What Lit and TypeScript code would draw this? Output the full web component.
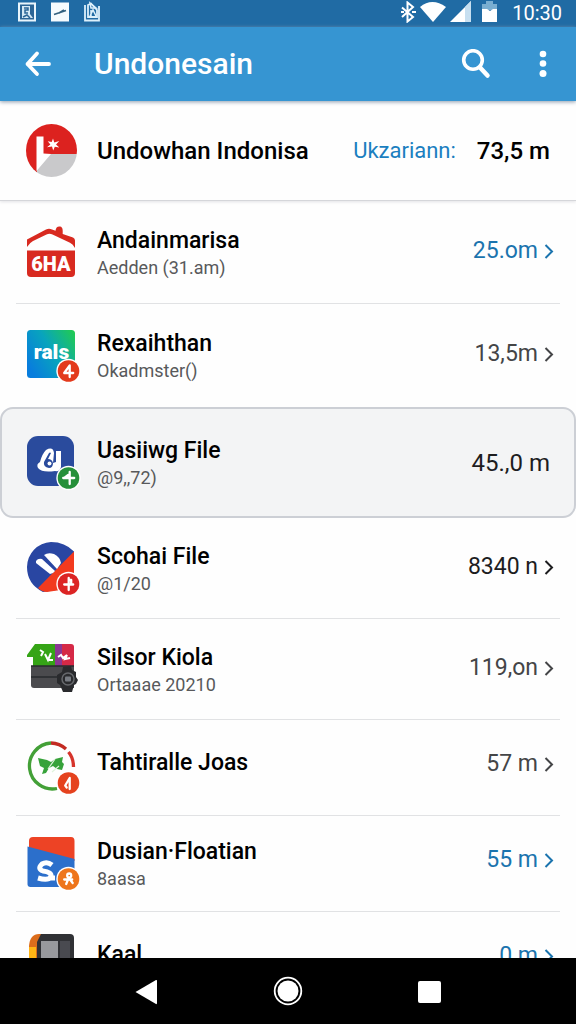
import { LitElement, html, css, svg, nothing, TemplateResult } from "lit";
import { customElement, property } from "lit/decorators.js";
import { classMap } from "lit/directives/class-map.js";

type Tone = "accent" | "soft" | "strong";

interface Entry {
  icon: string;
  title: string;
  detail?: string;
  value: string;
  tone: Tone;
  size: "tall" | "selected" | "regular" | "compact";
}

const entries: Entry[] = [
  { icon: "house", title: "Andainmarisa", detail: "Aedden (31.am)", value: "25.om", tone: "accent", size: "tall" },
  { icon: "tile", title: "Rexaihthan", detail: "Okadmster()", value: "13,5m", tone: "soft", size: "tall" },
  { icon: "drop", title: "Uasiiwg File", detail: "@9,,72)", value: "45.,0 m", tone: "strong", size: "selected" },
  { icon: "split", title: "Scohai File", detail: "@1/20", value: "8340 n", tone: "strong", size: "regular" },
  { icon: "camera", title: "Silsor Kiola", detail: "Ortaaae 20210", value: "119,on", tone: "soft", size: "regular" },
  { icon: "ring", title: "Tahtiralle Joas", value: "57 m", tone: "soft", size: "compact" },
  { icon: "folder", title: "Dusian·Floatian", detail: "8aasa", value: "55 m", tone: "accent", size: "compact" },
  { icon: "device", title: "Kaal", value: "0 m", tone: "accent", size: "compact" },
];

const badge = (fill: string, mark: TemplateResult) => svg`
  <circle cx="42.500" cy="42" r="12.200" fill="#fff"/>
  <circle cx="42.500" cy="42" r="10.800" fill=${fill}/>
  <g transform="translate(-.8 -1)" fill="none" stroke="#fff" stroke-width="2.300" stroke-linecap="round" stroke-linejoin="round">${mark}</g>`;

const four = svg`<path d="M44.500 49V37.500L39 45h9"/>`;

const art: Record<string, TemplateResult> = {
  flag: svg`
    <clipPath id="disc"><ellipse cx="25.500" cy="26.500" rx="25.500" ry="26.500"/></clipPath>
    <g clip-path="url(#disc)">
      <path d="M0 0h52v30H0z" fill="#dc221f"/>
      <path d="M0 30h52v24H8z" fill="#c9c9cb"/>
      <path d="M0 30h11v24H0z" fill="#dc221f"/>
      <path d="M10.500 12.500h7v17l7.500.5-14.500 17z" fill="#fff"/>
      <path d="M27 14.500l1.300 4 5-1.500-3.300 3.500 3.300 3-4.500-.8-1.600 3.800-1.200-4-5 .7 3.400-2.700-2.700-3.300 4 .9z" fill="#fff"/>
    </g>`,
  house: svg`
    <path d="M1 21v-7.500L20 3.500q3-1.500 6 0l3.500 1.300Q30 0 34 .5q2.500.3 2.700 4V8L47 11.500q2 .8 2 3V22q-2-4-5-5.200L26.500 8.500q-3-1.500-6 0L7 15q-3 1.500-6 6z" fill="#d82a20"/>
    <path d="M1 24.500h48V47q0 4-4 4H5q-4 0-4-4z" fill="#d82a20"/>
    <text x="25" y="45" text-anchor="middle" font-size="20" font-weight="900" fill="#fff">6HA</text>`,
  tile: svg`
    <defs><linearGradient id="sea" x1="0" y1=".7" x2="1" y2=".1">
      <stop offset="0" stop-color="#087ddd"/><stop offset=".5" stop-color="#08a4bd"/><stop offset="1" stop-color="#20c956"/>
    </linearGradient></defs>
    <rect x="1" y="1" width="48" height="48" rx="3.500" fill="url(#sea)"/>
    <text x="25.500" y="30" text-anchor="middle" font-size="21" font-weight="900" fill="#fff">rals</text>
    ${badge("#e33a1c", four)}`,
  drop: svg`
    <rect x="1" y="0" width="47" height="50" rx="11" fill="#2a4b9d"/>
    <path d="M20 14q7-4 8 3l-1 10 3-1V15h5v16q-1 5-6 4-13 2-17-3-2-4 2-6 2-8 6-12z" fill="#fff"/>
    <path d="M23 17q1-1 2 0l-3 6q4 0 5 4 0 5-4 5-6-1-5-6z" fill="#2a4b9d"/>
    <circle cx="23.500" cy="27.500" r="2" fill="#fff"/>
    ${badge("#26903a", svg`<path d="M44.500 37v12M38 43h11M39 43l4-3"/>`)}`,
  split: svg`
    <path d="M48 9.500v36L17 50Q1 42 1 25A25 25 0 0 1 25 0Q39 0 48 9.500z" fill="#2946a2"/>
    <path d="M48 9.500V46L21 50q-5 0-9-4z" fill="#f23a1e"/>
    <path d="M10 19q2-3 6-2l13 12q-2 3-5 3L10 21z" fill="#fff"/>
    <path d="M18 13q4-3 10-1 6 3 7 9l-4 6z" fill="#fff"/>
    ${badge("#dc2424", svg`<path d="M43.500 37v12M39 43.500h9M43.500 39h2.500v4"/>`)}`,
  camera: svg`
    <path d="M1 12L9 1h20v22H7V14H1z" fill="#35a416"/>
    <path d="M29 1h8v22h-8z" fill="#8b3693"/>
    <path d="M36 1h9q3 0 3 3v19H36z" fill="#d52946"/>
    <path d="M14 7l3 2-2 4M19 11l3 6 3-7M23 17h4M32 14l3-2 2 3 4-3-2 4 5-1" fill="none" stroke="#fff" stroke-width="2"/>
    <path d="M5 23h43v22H8q-3 0-3-3z" fill="#4b4b4e"/>
    <path d="M5 23h43M5 34h27" stroke="#292b2e" stroke-width="1.500"/>
    <path d="M37 24l8-1 1 4 4 2v5l2 3-2 4-2 1-2 7h-9l-3-7-3-2v-8l5-3z" fill="#292a2d"/>
    <circle cx="42" cy="36" r="6" fill="none" stroke="#66686c" stroke-width="1.500"/>
    <rect x="39" y="33.500" width="6" height="5" rx="1" fill="#777b82"/>`,
  ring: svg`
    <g fill="none" stroke-width="3.300">
      <path d="M25 2A23 23 0 1 0 31 47.500" stroke="#43a037"/>
      <path d="M25 2A23 23 0 0 1 40 8" stroke="#c32b22"/>
      <path d="M42.500 11Q47.500 17 47.500 26" stroke="#d6342b"/>
    </g>
    <path d="M12 17l9 2 4 2 4-3 8-2-1 5 2 2-2 6-5-1-4-3-4 2-3 5-4 1 2-6-4-2z" fill="#37a23a"/>
    <path d="M22 28l7-10M26 31l7-6" stroke="#dff3dc" stroke-width="1.200"/>
    ${badge("#e5421e", svg`<path d="M44.500 49V38L40 45.500l1.500 2"/>`)}`,
  folder: svg`
    <path d="M3 12V4q0-4 4-4h38q3.500 0 3.500 4v20z" fill="#ed4325"/>
    <path d="M1.500 9.500L48.500 22v28H4.500q-3 0-3-3z" fill="#2c6fcb"/>
    <path d="M26 28q-5-4-10-1-5 5 1 7 9 1 8 6-3 4-13 1M25 41h4" fill="none" stroke="#fff" stroke-width="5"/>
    ${badge("#ee751b", svg`<circle cx="44" cy="39.500" r="2"/><path d="M39 43.500h8M43 43l-2 5M44.500 43l3 4"/>`)}`,
  device: svg`
    <path d="M3 13Q4 1 13 1h18v49H3z" fill="#dc6d1c"/>
    <path d="M3 14h7v36H3z" fill="#ffb515"/>
    <path d="M15 1h29q4 0 4 4v45H11V9z" fill="#303135"/>
    <path d="M15 8h17v42H15z" fill="#98999d"/>
    <path d="M34 8h10v42H34z" fill="#494a50"/>`,
};

@customElement("entry-icon")
export class EntryIcon extends LitElement {
  @property() name = "";

  static styles = css`
    :host { display: block; width: 56px; height: 56px; }
    .art {
      display: block; width: 56px; height: 56px; overflow: visible;
      font-family: Roboto, "Noto Sans", sans-serif;
    }
  `;

  render() {
    return html`<svg class="art" viewBox="0 -1 56 56" aria-hidden="true">${art[this.name] ?? nothing}</svg>`;
  }
}

@customElement("status-bar")
export class StatusBar extends LitElement {
  static styles = css`
    :host {
      display: flex; justify-content: space-between; align-items: center;
      height: 27px; flex: none; padding: 0 14px 0 18px;
      background: #206ba4; color: #fff;
    }
    .group { display: flex; align-items: center; }
    .notices { gap: 15px; padding-bottom: 4px; }
    .system { gap: 4px; }
    .glyph { display: block; height: 22px; padding-bottom: 4px; }
    .notices .glyph { padding-bottom: 0; }
    .clock { font-size: 20px; line-height: 24px; padding-left: 6px; padding-bottom: 2px; }
  `;

  render() {
    return html`
      <div class="group notices">
        <svg class="glyph" width="18" viewBox="0 0 18 22" aria-hidden="true">
          <path d="M1 2.500h16v17H1z" fill="#2b6596" stroke="#e9f5fc" stroke-width="2"/>
          <path d="M4 5h8v8l3 4H4z" fill="#d5e9f5"/><path d="M6 7h4v2H7v3h3M5 16l4-2 3 3" fill="none" stroke="#2b6596" stroke-width="1.500"/>
        </svg>
        <svg class="glyph" width="18" viewBox="0 0 18 22" aria-hidden="true">
          <path d="M0 1.500h18v19H0z" fill="#f5fbfe"/><path d="M3 13.500l6-2 6-2M8 12l5-3" fill="none" stroke="#32617f" stroke-width="1.800"/>
        </svg>
        <svg class="glyph" width="16" viewBox="0 0 16 22" aria-hidden="true">
          <path d="M1 4v15.500h14V5M4 4v12h9V9L7 2.500z" fill="none" stroke="#dcf0fb" stroke-width="1.800"/>
          <path d="M6 2l6 5H7zM6 15l3-6 3 6M7 9v6" fill="none" stroke="#dcf0fb" stroke-width="1.500"/>
        </svg>
      </div>
      <div class="group system">
        <svg class="glyph" width="16" viewBox="0 0 16 22" aria-hidden="true">
          <path d="M2 6.500l11 9.500-5.500 4.500v-19L13 6 2 16M1 11h3M12 11h4" fill="none" stroke="#fff" stroke-width="2"/>
        </svg>
        <svg class="glyph" width="26" viewBox="0 0 26 22" aria-hidden="true">
          <path d="M0 6Q12 -4 26 6L13 21z" fill="#fff"/>
        </svg>
        <svg class="glyph" width="22" viewBox="0 0 22 22" aria-hidden="true">
          <path d="M0 21L21 0v21z" fill="#fff"/><path d="M15 6l6-6v21h-6z" fill="#c7dff0"/>
        </svg>
        <svg class="glyph" width="26" viewBox="0 0 26 22" aria-hidden="true">
          <path d="M6 3h4V0h7v3h4v6H6z" fill="#79aed1"/><path d="M6 8h5l3 2 3-2h4v13H6z" fill="#fff"/>
        </svg>
        <span class="clock">10:30</span>
      </div>`;
  }
}

@customElement("entry-row")
export class EntryRow extends LitElement {
  @property({ attribute: false }) entry!: Entry;

  static styles = css`
    :host { display: block; }
    .row {
      box-sizing: border-box; width: 100%; margin: 0; border: 0; background: none;
      font: inherit; text-align: left; color: #000; cursor: pointer;
      display: flex; align-items: center; padding: 0 22px 0 26px; position: relative;
    }
    .tall { min-height: 103px; }
    .regular { min-height: 101px; }
    .compact { min-height: 96px; }
    .row::after {
      content: ""; position: absolute; left: 16px; right: 16px; bottom: 0;
      height: 1px; background: #e1e2e4;
    }
    .unruled::after { display: none; }
    .selected {
      min-height: 111px; border: 2px solid #cccfd5; border-radius: 13px;
      background: #f3f4f5; padding: 0 24px;
    }
    .text { flex: 1; min-width: 0; padding: 2px 0 0 15px; display: flex; flex-direction: column; }
    .title { font-size: 23px; line-height: 28px; font-weight: 500; }
    .detail { font-size: 18px; line-height: 26px; color: #58595b; }
    .single { padding-bottom: 12px; }
    .amount { display: flex; align-items: center; gap: 6px; padding-bottom: 4px; font-size: 23px; line-height: 28px; }
    .selected .amount { font-size: 24px; padding-bottom: 0; }
    .compact .amount { padding-bottom: 8px; }
    .accent { color: #1b74ae; }
    .soft { color: #444547; }
    .strong { color: #1d1d1f; }
    .chevron { display: block; width: 10px; height: 18px; fill: none; stroke: currentColor; stroke-width: 2; }
  `;

  render() {
    const e = this.entry;
    const selected = e.size === "selected";
    return html`
      <button class=${classMap({ row: true, [e.size]: true, unruled: selected || e.icon === "tile" })} type="button">
        <entry-icon name=${e.icon}></entry-icon>
        <span class=${classMap({ text: true, single: !e.detail })}>
          <span class="title">${e.title}</span>
          ${e.detail ? html`<span class="detail">${e.detail}</span>` : nothing}
        </span>
        <span class="amount ${e.tone}">
          ${e.value}
          ${selected ? nothing : html`<svg class="chevron" viewBox="0 0 10 18" aria-hidden="true"><path d="M1.500 3L8 9.500 1.500 16"/></svg>`}
        </span>
      </button>`;
  }
}

@customElement("app-root")
export class AppRoot extends LitElement {
  static styles = css`
    :host {
      display: flex; flex-direction: column; height: 100vh; overflow: hidden;
      background: #fefefe; color: #000;
      font-family: Roboto, "Noto Sans", sans-serif;
    }
    .toolbar {
      flex: none; display: flex; align-items: center; height: 74px;
      background: #3695d2; color: #fff; padding: 0 9px 0 14px;
      box-shadow: 0 1px 4px #8d9cae; z-index: 1;
    }
    .heading { flex: 1; margin: 0; padding-left: 32px; font-size: 30px; line-height: 40px; font-weight: 500; }
    .tool {
      display: grid; place-items: center; width: 48px; height: 48px;
      border: 0; padding: 0; margin: 0; background: none; color: inherit; cursor: pointer;
    }
    .actions { display: flex; gap: 19px; }
    .summary {
      flex: none; display: flex; align-items: center; height: 100px; box-sizing: border-box;
      padding: 0 26px; border-bottom: 1px solid #d5d6da; box-shadow: 0 1px 3px #e3e3e6;
      font-size: 24px; line-height: 28px;
    }
    .name { flex: 1; padding-left: 15px; font-weight: 500; }
    .label { color: #1b7fc0; padding-right: 21px; font-size: 22px; }
    .total { font-weight: 500; }
    .list { flex: 1; min-height: 0; overflow: hidden; margin: 0; padding: 0; list-style: none; }
    .nav {
      flex: none; height: 66px; background: #000; color: #fff; padding: 0 72px;
      display: grid; grid-template-columns: repeat(3, 1fr); place-items: center;
    }
  `;

  render() {
    return html`
      <status-bar></status-bar>
      <header class="toolbar">
        <button class="tool" type="button" aria-label="Back">
          <svg width="28" height="28" viewBox="0 0 28 28" fill="none" stroke="currentColor" stroke-width="3.800" stroke-linecap="round" stroke-linejoin="round" aria-hidden="true">
            <path d="M25 14H3.500M13 3.500L3.500 14 13 24"/>
          </svg>
        </button>
        <h1 class="heading">Undonesain</h1>
        <div class="actions">
          <button class="tool" type="button" aria-label="Search">
            <svg width="30" height="30" viewBox="0 0 30 30" fill="none" stroke="currentColor" stroke-linecap="round" aria-hidden="true">
              <circle cx="12" cy="11" r="9.300" stroke-width="3.600"/><path d="M19 18.500l7.500 8" stroke-width="4.500"/>
            </svg>
          </button>
          <button class="tool" type="button" aria-label="More options">
            <svg width="8" height="28" viewBox="0 0 8 28" fill="currentColor" aria-hidden="true">
              <circle cx="4" cy="4" r="3.300"/><circle cx="4" cy="13.500" r="3.300"/><circle cx="4" cy="23.500" r="3.500"/>
            </svg>
          </button>
        </div>
      </header>
      <section class="summary">
        <entry-icon name="flag"></entry-icon>
        <span class="name">Undowhan Indonisa</span>
        <span class="label">Ukzariann:</span>
        <span class="total">73,5 m</span>
      </section>
      <ul class="list">
        ${entries.map((e) => html`<li><entry-row .entry=${e}></entry-row></li>`)}
      </ul>
      <nav class="nav" aria-label="System">
        <button class="tool" type="button" aria-label="Back">
          <svg width="28" height="28" viewBox="0 0 28 28" fill="currentColor" aria-hidden="true"><path d="M5.500 15L26 3q1-.5 1 1v22q0 1.500-1 1z"/></svg>
        </button>
        <button class="tool" type="button" aria-label="Home">
          <svg width="30" height="30" viewBox="0 0 30 30" aria-hidden="true">
            <circle cx="15" cy="15" r="13.300" fill="none" stroke="#fff" stroke-width="1.800"/><circle cx="15" cy="15" r="10.500" fill="#fff"/>
          </svg>
        </button>
        <button class="tool" type="button" aria-label="Recent apps">
          <svg width="28" height="28" viewBox="0 0 28 28" aria-hidden="true"><rect x="0" y="4" width="23" height="22" rx="2" fill="currentColor"/></svg>
        </button>
      </nav>`;
  }
}
